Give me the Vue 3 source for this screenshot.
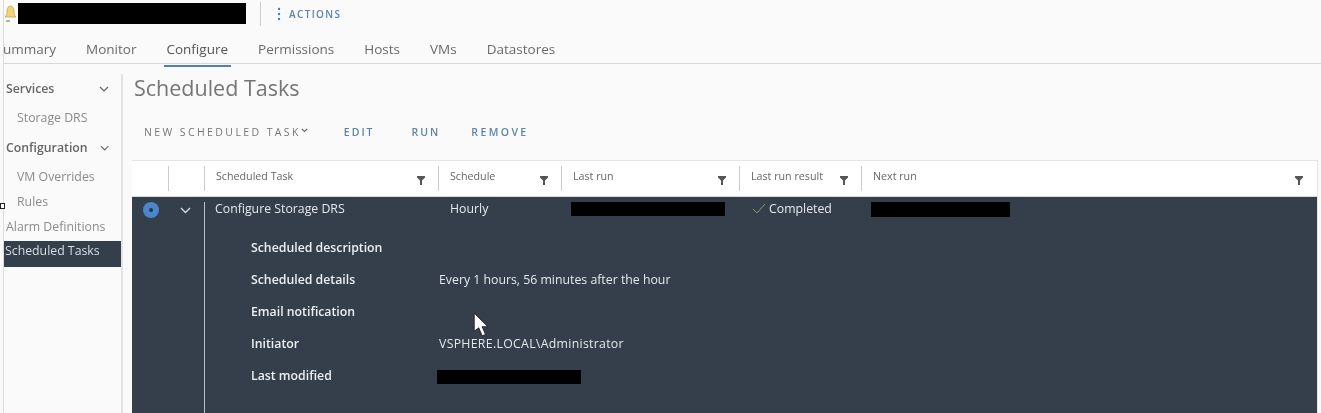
<script setup>
const tabs = ['ummary', 'Monitor', 'Configure', 'Permissions', 'Hosts', 'VMs', 'Datastores']
const columns = [
  { name: 'Scheduled Task', width: '234px' },
  { name: 'Schedule', width: '123px' },
  { name: 'Last run', width: '178px' },
  { name: 'Last run result', width: '122px' },
  { name: 'Next run', width: '1fr' }
]
const details = [
  { label: 'Scheduled description', value: '', offset: 'v188' },
  { label: 'Scheduled details', value: 'Every 1 hours, 56 minutes after the hour', offset: 'v188' },
  { label: 'Email notification', value: '', offset: 'v188' },
  { label: 'Initiator', value: 'VSPHERE.LOCAL\\Administrator', offset: 'wide' },
  { label: 'Last modified', redacted: true, offset: 'v186' }
]
</script>

<template>
  <div class="page">
    <header class="top">
      <svg class="bell" width="14" height="22" viewBox="0 0 14 22">
        <path d="M1 14c1.500-1 2-3 2-6 0-3 1.500-5 3.500-5S10 5 10 8c0 3 .5 5 2 6z" fill="#efd772" stroke="#b9a24e" stroke-width=".7" />
        <path d="M2 18h4" stroke="#999" stroke-width="1.500" />
      </svg>
      <div class="black name"></div>
      <div class="top-sep"></div>
      <svg class="dots" width="4" height="14" viewBox="0 0 4 14">
        <circle cx="2" cy="2" r="1.200" /><circle cx="2" cy="7" r="1.200" /><circle cx="2" cy="12" r="1.200" />
      </svg>
      <span class="actions">ACTIONS</span>
    </header>

    <nav class="tabs">
      <span v-for="t in tabs" :key="t" class="tab" :class="{ on: t === 'Configure' }">{{ t }}</span>
    </nav>

    <div class="body">
      <aside class="side">
        <div class="group first">Services
          <svg width="10" height="6" viewBox="0 0 10 6"><path d="M1 1l4 4 4-4" /></svg>
        </div>
        <div class="item sub s1">Storage DRS</div>
        <div class="group second">Configuration
          <svg width="10" height="6" viewBox="0 0 10 6"><path d="M1 1l4 4 4-4" /></svg>
        </div>
        <div class="item sub s2">VM Overrides</div>
        <div class="item sub s3">Rules</div>
        <div class="item s4">Alarm Definitions</div>
        <div class="item active">Scheduled Tasks</div>
      </aside>

      <main class="main">
        <h1>Scheduled Tasks</h1>
        <div class="toolbar">
          <span class="new">NEW SCHEDULED TASK<svg width="7" height="5" viewBox="0 0 7 5"><path d="M.8.8l2.700 2.700L6.200.8" /></svg></span>
          <span class="btn edit">EDIT</span>
          <span class="btn run">RUN</span>
          <span class="btn remove">REMOVE</span>
        </div>

        <section class="grid">
          <div class="head">
            <div class="cell-fixed one"><i></i></div>
            <div class="cell-fixed"><i></i></div>
            <div class="heads">
              <div v-for="c in columns" :key="c.name" class="hcell" :style="{ flex: c.width === '1fr' ? '1' : '0 0 ' + c.width }">
                <span>{{ c.name }}</span>
                <svg width="8" height="9" viewBox="0 0 8 9"><path d="M0 0h8v1.500L5 4.500V9H3V4.500L0 1.500z" /></svg>
              </div>
            </div>
          </div>
          <div class="row">
            <div class="gutter">
              <div class="radio"><b></b></div>
              <svg class="caret" width="11" height="7" viewBox="0 0 11 7"><path d="M1 1l4.500 4.500L10 1" /></svg>
            </div>
            <div class="content">
              <div class="summary">
                <span class="c1">Configure Storage DRS</span>
                <span class="c2">Hourly</span>
                <span class="c3"><em class="black lastrun"></em></span>
                <span class="c4">
                  <svg width="14" height="11" viewBox="0 0 14 11"><path d="M1 6l4 4 8-9" /></svg>Completed
                </span>
                <span class="c5"><em class="black nextrun"></em></span>
              </div>
              <dl class="details">
                <div v-for="d in details" :key="d.label" class="drow">
                  <dt>{{ d.label }}</dt>
                  <dd :class="d.offset">
                    <em v-if="d.redacted" class="black modified"></em>
                    <template v-else>{{ d.value }}</template>
                  </dd>
                </div>
              </dl>
              <svg class="cursor" width="16" height="26" viewBox="0 0 14 23">
                <path d="M1 1v16l4-3 3 7 3-1-3-7h5z" fill="#fff" stroke="#222" stroke-width=".8" />
              </svg>
            </div>
          </div>
        </section>
      </main>
    </div>
    <div class="marker"></div>
  </div>
</template>

<style>
html, body { margin: 0; background: #fafafa; overflow: hidden; }
</style>

<style scoped>
.page {
  position: relative;
  width: 1321px;
  height: 413px;
  overflow: hidden;
  box-sizing: border-box;
  padding-left: 4px;
  background: #fafafa;
  font-family: "Open Sans", "Noto Sans", sans-serif;
  color: #666;
  filter: blur(.5px);
}
.page::before {
  content: "";
  position: absolute;
  left: 3px; top: 0; bottom: 0;
  width: 1px;
  background: #dcdcdc;
}
.black { display: block; background: #000; }
.top { display: flex; align-items: center; height: 28px; position: relative; }
.bell { position: absolute; left: 0; top: 3px; }
.name { width: 228px; height: 21px; margin-left: 14px; margin-top: -2px; }
.top-sep { width: 1px; height: 24px; background: #ccc; margin-left: 14px; }
.dots { margin-left: 16px; fill: #4a7fb5; }
.actions { margin-left: 8px; font-size: 10px; font-weight: 600; letter-spacing: 1.350px; color: #5b84ad; }

.tabs {
  display: flex;
  height: 36px;
  box-sizing: border-box;
  border-bottom: 1px solid #d6d6d6;
  margin-left: -1px;
  padding-top: 12px;
  font-size: 13.500px;
  color: #6a6a6a;
}
.tab { position: relative; margin-right: 30px; line-height: 18px; }
.tab.on { color: #555; }
.tab.on::after {
  content: "";
  position: absolute;
  left: -2px; right: -3px; bottom: -4px;
  height: 2px;
  background: #4a80bd;
}

.body { display: flex; height: 349px; }
.side {
  width: 117px;
  margin-top: 10px;
  border-right: 2px solid #e2e2e2;
  font-size: 12.300px;
  flex: none;
}
.group {
  display: flex;
  align-items: center;
  justify-content: space-between;
  font-weight: 600;
  color: #666;
  padding: 0 12px 0 2px;
  line-height: 18px;
}
.group svg, .new svg { fill: none; stroke: #666; stroke-width: 1.200; }
.first { margin-top: 6px; }
.second { margin-top: 12px; justify-content: flex-start; gap: 12px; }
.item { line-height: 18px; color: #8b8b8b; padding-left: 2px; white-space: nowrap; }
.sub { padding-left: 13px; }
.s1 { margin-top: 11px; }
.s2 { margin-top: 11px; }
.s3 { margin-top: 7px; }
.s4 { margin-top: 7px; }
.active {
  margin-top: 5px;
  height: 26px;
  line-height: 20px;
  padding-left: 1px;
  background: #333f4b;
  color: #d8dde2;
}

.main { flex: 1; min-width: 0; padding-left: 9px; }
h1 {
  margin: 10px 0 0 2px;
  font-size: 21.500px;
  font-weight: 400;
  line-height: 28px;
  color: #757575;
}
.toolbar {
  display: flex;
  align-items: center;
  height: 18px;
  margin-top: 21px;
  font-size: 10.500px;
  letter-spacing: 2.400px;
  color: #777;
}
.new { margin-left: 12px; white-space: nowrap; }
.new svg { margin: 0 0 3px 0; }
.btn { color: #5b84ad; font-weight: 600; letter-spacing: 2px; }
.edit { margin-left: 36px; }
.run { margin-left: 37px; }
.remove { margin-left: 31px; letter-spacing: 2.400px; }

.grid {
  margin-top: 19px;
  margin-right: 3px;
  border: 1px solid #e4e4e4;
  border-bottom: 0;
  border-left: 0;
  background: #fff;
}
.head { display: flex; height: 35px; background: #fff; border-bottom: 1px solid #d8d8d8; }
.cell-fixed { flex: 0 0 36px; position: relative; }
.cell-fixed.one { flex-basis: 37px; }
.cell-fixed i {
  position: absolute; right: 0; top: 5px; bottom: 5px; width: 1px; background: #ccc;
}
.heads { flex: 1; display: flex; }
.hcell {
  position: relative;
  display: flex;
  justify-content: space-between;
  box-sizing: border-box;
  padding: 8px 14px 0 11px;
  font-size: 10.700px;
  color: #666;
}
.hcell:not(:last-child)::after {
  content: "";
  position: absolute;
  right: 0; top: 5px; bottom: 5px;
  width: 1px;
  background: #ccc;
}
.hcell svg { margin-top: 7px; fill: #555; flex: none; }

.row { display: flex; height: 217px; background: #343f4b; color: #e4e8ec; }
.gutter { flex: 0 0 73px; position: relative; border-right: 1px solid #b8bec4; box-sizing: border-box; margin-top: 5px; }
.radio {
  position: absolute;
  left: 11px; top: 0;
  width: 16px; height: 16px;
  border-radius: 50%;
  background: #4a86c8;
  display: flex;
  align-items: center;
  justify-content: center;
}
.radio b { width: 4px; height: 4px; border-radius: 50%; background: #24384c; }
.caret { position: absolute; left: 48px; top: 5px; fill: none; stroke: #d8dde2; stroke-width: 1.300; }
.content { flex: 1; position: relative; font-size: 12.300px; }
.summary { display: flex; height: 25px; padding-top: 3px; line-height: 18px; }
.summary > span { display: block; box-sizing: border-box; }
.c1 { flex: 0 0 234px; padding-left: 10px; }
.c2 { flex: 0 0 123px; padding-left: 11px; }
.c3 { flex: 0 0 178px; padding-left: 9px; }
.c4 { flex: 0 0 122px; padding-left: 12px; white-space: nowrap; }
.c4 svg { fill: none; stroke: #7fa35f; stroke-width: 1; margin-right: 3px; vertical-align: -1px; }
.c5 { flex: 1; padding-left: 9px; }
.lastrun { width: 154px; height: 14px; margin-top: 2px; }
.nextrun { width: 139px; height: 15px; margin-top: 2px; }
.details { margin: 0; padding: 13.500px 0 0 46px; }
.drow { display: flex; height: 32px; line-height: 18px; white-space: nowrap; }
dt { flex: 0 0 188px; font-weight: 600; color: #eceff2; }
dd { margin: 0; }
.wide { letter-spacing: .3px; }
.v186 { margin-left: -2px; }
.modified { width: 144px; height: 14px; margin-top: 3px; }
.cursor { position: absolute; left: 268px; top: 115px; }
.marker {
  position: absolute;
  left: 0; top: 203px;
  width: 3px; height: 4px;
  border: 1px solid #222;
  background: #fff;
}
</style>
